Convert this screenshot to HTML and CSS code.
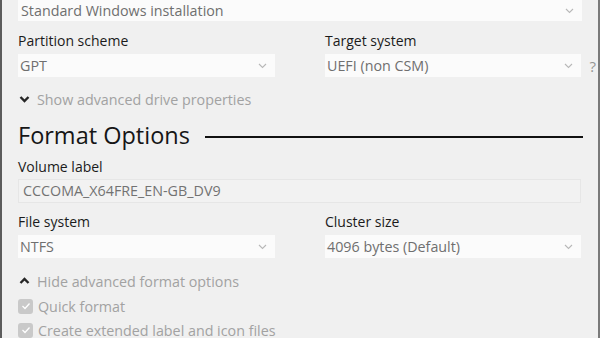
FILE: index.html
```html
<!DOCTYPE html>
<html lang="en">
<head>
    <meta charset="UTF-8">
    <title>Rufus</title>
    <link rel="stylesheet" href="styles.css">
</head>
<body>
    <div class="window">
        <div class="combo combo-top">
            <span>Standard Windows installation</span>
            <svg class="chev" width="9" height="6" viewBox="0 0 9 6"><path d="M1 1l3.5 3.5L8 1" fill="none" stroke="#b8b8b8" stroke-width="1.1"/></svg>
        </div>

        <div class="grid row-partition">
            <div class="field">
                <div class="label">Partition scheme</div>
                <div class="combo">
                    <span>GPT</span>
                    <svg class="chev" width="9" height="6" viewBox="0 0 9 6"><path d="M1 1l3.5 3.5L8 1" fill="none" stroke="#b8b8b8" stroke-width="1.1"/></svg>
                </div>
            </div>
            <div class="field">
                <div class="label">Target system</div>
                <div class="combo">
                    <span>UEFI (non CSM)</span>
                    <svg class="chev" width="9" height="6" viewBox="0 0 9 6"><path d="M1 1l3.5 3.5L8 1" fill="none" stroke="#b8b8b8" stroke-width="1.1"/></svg>
                    <span class="help">?</span>
                </div>
            </div>
        </div>

        <div class="toggle toggle-drive">
            <svg width="11" height="8" viewBox="0 0 11 8"><path d="M1.5 2l4 4 4-4" fill="none" stroke="#262626" stroke-width="2.4"/></svg>
            <span>Show advanced drive properties</span>
        </div>

        <div class="heading">
            <h2>Format Options</h2>
            <div class="rule"></div>
        </div>

        <div class="label label-volume">Volume label</div>
        <div class="textbox">CCCOMA_X64FRE_EN-GB_DV9</div>

        <div class="grid row-fs">
            <div class="field">
                <div class="label">File system</div>
                <div class="combo">
                    <span>NTFS</span>
                    <svg class="chev" width="9" height="6" viewBox="0 0 9 6"><path d="M1 1l3.5 3.5L8 1" fill="none" stroke="#b8b8b8" stroke-width="1.1"/></svg>
                </div>
            </div>
            <div class="field">
                <div class="label">Cluster size</div>
                <div class="combo">
                    <span>4096 bytes (Default)</span>
                    <svg class="chev" width="9" height="6" viewBox="0 0 9 6"><path d="M1 1l3.5 3.5L8 1" fill="none" stroke="#b8b8b8" stroke-width="1.1"/></svg>
                </div>
            </div>
        </div>

        <div class="toggle toggle-format">
            <svg width="11" height="8" viewBox="0 0 11 8"><path d="M1.5 6l4-4 4 4" fill="none" stroke="#262626" stroke-width="2.4"/></svg>
            <span>Hide advanced format options</span>
        </div>

        <div class="check check-quick">
            <span class="box"><svg width="10" height="8" viewBox="0 0 10 8"><path d="M1.5 4l2.5 2.5L8.5 1.5" fill="none" stroke="#fff" stroke-width="1.3"/></svg></span>
            <span>Quick format</span>
        </div>
        <div class="check">
            <span class="box"><svg width="10" height="8" viewBox="0 0 10 8"><path d="M1.5 4l2.5 2.5L8.5 1.5" fill="none" stroke="#fff" stroke-width="1.3"/></svg></span>
            <span>Create extended label and icon files</span>
        </div>
    </div>
</body>
</html>
```

FILE: styles.css
```css
html, body {
    margin: 0;
    padding: 0;
    height: 100%;
    overflow: hidden;
}
body {
    font-family: "Open Sans", "Noto Sans", sans-serif;
    font-size: 14px;
    color: #1b1b1b;
    background-color: #f0f0f0;
}
.window {
    width: 600px;
    height: 338px;
    box-sizing: border-box;
    border-left: 2px solid #5c5c5c;
    border-right: 2px solid #7a7a7a;
    padding: 0 16px 0 16px;
}
.grid {
    display: grid;
    grid-template-columns: 257px 256px;
    column-gap: 50px;
}
.label {
    height: 20px;
    line-height: 20px;
    margin-bottom: 3px;
}
.combo {
    position: relative;
    display: flex;
    align-items: center;
    justify-content: space-between;
    height: 23px;
    padding: 0 8px 0 2px;
    background-color: #fbfbfb;
    color: #6f6f6f;
    font-size: 14.3px;
}
.combo-top {
    height: 21px;
    width: 564px;
    box-sizing: border-box;
    padding-left: 3px;
}
.row-partition {
    margin-top: 10px;
}
.help {
    position: absolute;
    right: -15px;
    color: #959595;
    font-size: 15px;
}
.toggle {
    display: flex;
    align-items: center;
    gap: 7px;
    height: 20px;
    padding-left: 1px;
    color: #a2a2a2;
    font-size: 14.3px;
}
.toggle-drive {
    margin-top: 12px;
}
.heading {
    display: flex;
    align-items: center;
    height: 30px;
    margin-top: 11px;
    width: 565px;
}
.heading h2 {
    margin: 0;
    font-size: 23.5px;
    font-weight: normal;
    color: #161616;
}
.rule {
    flex: 1;
    height: 2px;
    background-color: #111;
    margin-left: 15px;
    margin-top: 4px;
}
.label-volume {
    margin-top: 7px;
    margin-bottom: 2px;
}
.textbox {
    height: 24px;
    width: 563px;
    box-sizing: border-box;
    line-height: 22px;
    padding-left: 4px;
    border: 1px solid #e6e6e6;
    background-color: #f2f2f2;
    color: #727272;
    font-size: 14.3px;
}
.row-fs {
    margin-top: 9px;
}
.toggle-format {
    margin-top: 13px;
}
.check {
    display: flex;
    align-items: center;
    gap: 5px;
    height: 20px;
    margin-top: 4px;
    color: #a2a2a2;
    font-size: 14.3px;
}
.check-quick {
    margin-top: 5px;
}
.box {
    display: flex;
    align-items: center;
    justify-content: center;
    width: 15px;
    height: 15px;
    border-radius: 3px;
    background-color: #c9c9c9;
}
```
